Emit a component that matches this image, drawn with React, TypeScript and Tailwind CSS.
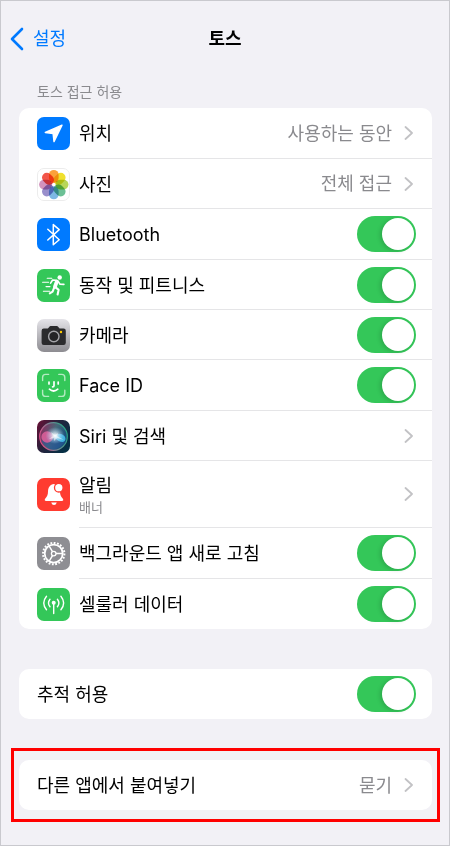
import { useState } from 'react'
import type { ReactNode } from 'react'

const LocationIcon = () => (
    <>
        <rect width="33" height="33" rx="7" fill="#007aff"/>
        <path d="M25 8.2 8.3 15.5l7.8 1.1.9 8Z" fill="#fff" stroke="#fff" strokeWidth="1.4" strokeLinejoin="round"/>
    </>
)

const petals = ['#fba13a', '#f0e02e', '#b8d658', '#6cc095', '#7db8e4', '#998fcc', '#d293be', '#f2564a']

const PhotosIcon = () => (
    <>
        <rect x=".5" y=".5" width="32" height="32" rx="6.5" fill="#fff" stroke="#ececec"/>
        <g style={{ isolation: 'isolate' }}>
            {petals.map((color, i) => (
                <rect
                    key={color}
                    x="12" y="1.9" width="9.6" height="13" rx="4.8"
                    fill={color}
                    transform={`rotate(${i * 45} 16.8 16.6)`}
                    className="mix-blend-multiply"/>
            ))}
        </g>
    </>
)

const BluetoothIcon = () => (
    <>
        <rect width="33" height="33" rx="7" fill="#007aff"/>
        <path d="m10.8 11.3 11.4 10.4-5.9 5V6.6l5.9 5L10.8 22" fill="none" stroke="#fff" strokeWidth="1.5" strokeLinejoin="round" strokeLinecap="round"/>
    </>
)

const FitnessIcon = () => (
    <>
        <rect width="33" height="33" rx="7" fill="#34c759"/>
        <g fill="none" stroke="#fff" strokeLinecap="round" strokeLinejoin="round">
            <path d="M10.2 9.2h4.6M5.6 13.3h6M9 17.6h4M6.4 22.2h6.4" strokeWidth="1.1"/>
            <path d="m19.8 12.6-1.9 5.2" strokeWidth="3.8"/>
            <path d="m19.4 11.4-3.8-.4-2 3.2M21.2 12.4l1.8 2.8 3.9.2" strokeWidth="1.6"/>
            <path d="m18.6 18.2 3 2.7-1 4.6M17 19l-1.4 3.7-2.8 1.6" strokeWidth="2.1"/>
        </g>
        <circle cx="22.7" cy="8.5" r="2.2" fill="#fff"/>
    </>
)

const CameraIcon = () => (
    <>
        <defs>
            <linearGradient id="camera-bg" x2="0" y2="1">
                <stop stopColor="#e5e4e9"/>
                <stop offset="1" stopColor="#8d8c91"/>
            </linearGradient>
        </defs>
        <rect width="33" height="33" rx="7" fill="url(#camera-bg)"/>
        <path d="M6.8 9.600h4.100l1.500-1.900q.5-.6 1.200-.6h6.200q.8 0 1.300.6l1.500 1.900h4q2.200 0 2.200 2.200v12q0 2.200-2.200 2.200H6.800q-2.200 0-2.200-2.200v-12q0-2.200 2.200-2.200Z" fill="#2b2b2d"/>
        <circle cx="16.8" cy="17.5" r="5.2" fill="#242426" stroke="#a4a4a8" strokeWidth="1.4"/>
        <circle cx="24" cy="13" r="1.2" fill="#ffcc00"/>
    </>
)

const FaceIdIcon = () => (
    <>
        <rect width="33" height="33" rx="7" fill="#34c759"/>
        <path d="M5.6 11.5V8.4q0-3 3-3h3M21.8 5.4h3q3 0 3 3v3.1M27.8 21.2v3.2q0 3-3 3h-3M11.6 27.4h-3q-3 0-3-3v-3.2" fill="none" stroke="#b4ebc2" strokeWidth="1.4" strokeLinecap="round"/>
        <path d="M12 13v1.9M21.2 13v1.9M17 12.8v3.9q0 1.1-1.4 1.1M12.4 20.2q4.2 3.6 8.400 0" fill="none" stroke="#fff" strokeWidth="1.7" strokeLinecap="round"/>
    </>
)

const SiriIcon = () => (
    <>
        <defs>
            <linearGradient id="siri-bg" x2="1" y2=".6">
                <stop stopColor="#6b0f35"/>
                <stop offset=".5" stopColor="#25233c"/>
                <stop offset="1" stopColor="#062f45"/>
            </linearGradient>
            <linearGradient id="siri-ring" x1="0" y1=".6" x2="1" y2=".3">
                <stop stopColor="#e04a86"/>
                <stop offset=".5" stopColor="#6f8894"/>
                <stop offset="1" stopColor="#22a481"/>
            </linearGradient>
            <linearGradient id="siri-orb" x1="0" y1=".2" x2="1" y2=".6">
                <stop stopColor="#a32b66"/>
                <stop offset=".5" stopColor="#52808d"/>
                <stop offset="1" stopColor="#15568f"/>
            </linearGradient>
            <radialGradient id="siri-glow">
                <stop stopColor="#fff"/>
                <stop offset=".3" stopColor="#e8f4ff" stopOpacity=".7"/>
                <stop offset="1" stopColor="#9fd6ff" stopOpacity="0"/>
            </radialGradient>
        </defs>
        <rect width="33" height="33" rx="7" fill="url(#siri-bg)"/>
        <circle cx="16.5" cy="16.5" r="13.8" fill="url(#siri-orb)" fillOpacity=".75" stroke="url(#siri-ring)" strokeWidth="1.2"/>
        <path d="M4.5 21Q16 38 28.5 21q-6-4-12-5-6 1-12 5Z" fill="#2856a0" fillOpacity=".5"/>
        <circle cx="10.2" cy="17" r="5.8" fill="#e0609c" fillOpacity=".85"/>
        <path d="M17 16.500q5-5 10.500-.5 2.500 4-1.500 6-5 0-9-5.500Z" fill="#48c4f0" fillOpacity=".85"/>
        <ellipse cx="18" cy="15.5" rx="9.500" ry="8.500" fill="url(#siri-glow)"/>
        <path d="m14 12 4 3 3-2-1 3 7 4-7-2-3 3v-3l-5 1 4-3Z" fill="#fff" fillOpacity=".5"/>
    </>
)

const BellIcon = () => (
    <>
        <rect width="33" height="33" rx="7" fill="#ff3b30"/>
        <path d="M17 6c-4 .5-6 3.500-6 7.500 0 3.500-1 5-2.500 6.700-1.300 1.500-.9 2.800.7 2.800h15.600c1.600 0 2-1.300 .7-2.800-1.500-1.700-2.500-3.200-2.500-6.700V10Z" fill="#fff"/>
        <path d="M14.2 24.400h5.600q-.8 2.600-2.800 2.600t-2.800-2.600Z" fill="#fff"/>
        <circle cx="21.8" cy="9.7" r="4.3" fill="#fff" stroke="#ff3b30" strokeWidth="1.3"/>
    </>
)

const GearIcon = () => (
    <>
        <rect width="33" height="33" rx="7" fill="#8e8e93"/>
        <g fill="none" stroke="#fff">
            <circle cx="16.7" cy="16.6" r="10.7" strokeWidth="2" pathLength="40" strokeDasharray="1.1 .9"/>
            <circle cx="16.7" cy="16.6" r="9" strokeWidth="1.8"/>
            <circle cx="16.7" cy="16.6" r="2.3" strokeWidth="1.3"/>
            <path d="M19 16.6h7M15.5 14.6l-3.6-6M15.5 18.6l-3.6 6" strokeWidth="1.5"/>
        </g>
    </>
)

const CellularIcon = () => (
    <>
        <rect width="33" height="33" rx="7" fill="#34c759"/>
        <path d="M16.7 15v10.5M13 11.2q-3 3.8 0 7.6M20.4 11.2q3 3.8 0 7.6M9.5 8.2q-5.5 6.8 0 13.6M23.9 8.2q5.5 6.8 0 13.6" fill="none" stroke="#fff" strokeWidth="1.4" strokeLinecap="round"/>
        <circle cx="16.7" cy="14.8" r="2" fill="#fff"/>
    </>
)

const Chevron = () => (
    <svg viewBox="0 0 10 14" className="w-[10px] h-[14px] shrink-0" aria-hidden="true">
        <path d="m1.5 1 6.5 6-6.5 6" fill="none" stroke="#c2c2c5" strokeWidth="1.8" strokeLinecap="round" strokeLinejoin="round"/>
    </svg>
)

type RowProps = {
    label: string
    icon?: ReactNode
    value?: string
    sub?: string
    toggle?: boolean
}

function Row({ label, icon, value, sub, toggle }: RowProps) {
    const [ on, setOn ] = useState(true)

    const body = (
        <>
            {icon && <svg viewBox="0 0 33 33" className="w-[33px] h-[33px] mr-[9px] shrink-0" aria-hidden="true">{icon}</svg>}
            <span className="flex flex-1 self-stretch items-center border-b border-[#e5e5e7] group-last:border-none">
                <span className="flex-1 flex flex-col pt-[2px]">
                    <span className="leading-6">{label}</span>
                    {sub && <span className="text-[13px] leading-[18px] text-[#8a8a8e]">{sub}</span>}
                </span>
                {toggle ? (
                    <input
                        type="checkbox"
                        role="switch"
                        checked={on}
                        onChange={() => setOn(prev => !prev)}
                        className="appearance-none flex w-[59px] h-9 p-[2px] mr-4 rounded-full bg-gray-200 cursor-pointer checked:bg-[#34c759] checked:justify-end before:block before:w-8 before:h-8 before:rounded-full before:bg-white before:shadow-[-2px_1px_4px_rgba(0,0,0,0.15)]"/>
                ) : (
                    <span className="flex items-center gap-3 mr-[18px] text-[#8a8a8e]">
                        {value}
                        <Chevron/>
                    </span>
                )}
            </span>
        </>
    )

    return (
        <li className={`group flex ${sub ? 'h-[67px]' : 'h-[50px] nth-[3n]:h-[51px] first:not-last:h-[51px]'}`}>
            {toggle
                ? <label className="flex flex-1 items-center pl-[18px]">{body}</label>
                : <button type="button" className="flex flex-1 items-center pl-[18px] text-left cursor-pointer">{body}</button>}
        </li>
    )
}

function Card({ children }: { children: ReactNode }) {
    return <ul className="bg-white rounded-[10px] overflow-hidden">{children}</ul>
}

export default function App() {
    return (
        <div className="min-h-screen bg-[#f2f1f6] border border-[#c9c9ce] text-black text-[18px] font-['Inter','Noto_Sans_CJK_KR',sans-serif]">
            <header className="grid grid-cols-[1fr_auto_1fr] items-center h-[75px] px-2">
                <a href="#settings" className="flex items-center gap-2 text-[#007aff]">
                    <svg viewBox="0 0 16 24" className="w-4 h-6" aria-hidden="true">
                        <path d="M13 2 3 12l10 10" fill="none" stroke="currentColor" strokeWidth="2.6" strokeLinecap="round" strokeLinejoin="round"/>
                    </svg>
                    설정
                </a>
                <h1 className="font-bold">토스</h1>
            </header>

            <main className="pl-[18px] pr-[17px]">
                <h2 className="px-[18px] py-[6px] text-sm leading-5 text-[#8a8a8e]">토스 접근 허용</h2>
                <Card>
                    <Row label="위치" icon={<LocationIcon/>} value="사용하는 동안"/>
                    <Row label="사진" icon={<PhotosIcon/>} value="전체 접근"/>
                    <Row label="Bluetooth" icon={<BluetoothIcon/>} toggle/>
                    <Row label="동작 및 피트니스" icon={<FitnessIcon/>} toggle/>
                    <Row label="카메라" icon={<CameraIcon/>} toggle/>
                    <Row label="Face ID" icon={<FaceIdIcon/>} toggle/>
                    <Row label="Siri 및 검색" icon={<SiriIcon/>}/>
                    <Row label="알림" sub="배너" icon={<BellIcon/>}/>
                    <Row label="백그라운드 앱 새로 고침" icon={<GearIcon/>} toggle/>
                    <Row label="셀룰러 데이터" icon={<CellularIcon/>} toggle/>
                </Card>

                <div className="mt-10">
                    <Card>
                        <Row label="추적 허용" toggle/>
                    </Card>
                </div>

                <div className="mt-[29px] -mx-2 border-[3px] border-[#ff0000] px-[5px] py-[9px]">
                    <Card>
                        <Row label="다른 앱에서 붙여넣기" value="묻기"/>
                    </Card>
                </div>
            </main>
        </div>
    )
}
